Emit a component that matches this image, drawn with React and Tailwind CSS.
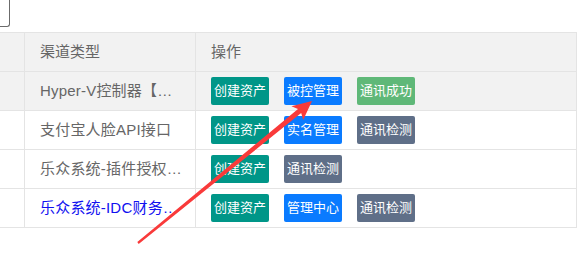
import React from "react";

const rows = [
  {
    name: "Hyper-V控制器【…",
    active: true,
    buttons: [
      { label: "创建资产", color: "bg-[#009688]" },
      { label: "被控管理", color: "bg-[#0a7bff]" },
      { label: "通讯成功", color: "bg-[#5fb878]" },
    ],
  },
  {
    name: "支付宝人脸API接口",
    buttons: [
      { label: "创建资产", color: "bg-[#009688]" },
      { label: "实名管理", color: "bg-[#0a7bff]" },
      { label: "通讯检测", color: "bg-[#5f6f88]" },
    ],
  },
  {
    name: "乐众系统-插件授权…",
    buttons: [
      { label: "创建资产", color: "bg-[#009688]" },
      { label: "通讯检测", color: "bg-[#5f6f88]" },
    ],
  },
  {
    name: "乐众系统-IDC财务…",
    link: true,
    buttons: [
      { label: "创建资产", color: "bg-[#009688]" },
      { label: "管理中心", color: "bg-[#0a7bff]" },
      { label: "通讯检测", color: "bg-[#5f6f88]" },
    ],
  },
];

function Arrow() {
  return (
    <svg
      className="absolute inset-0 pointer-events-none"
      width="578"
      height="278"
      viewBox="0 0 578 278"
    >
      <path
        d="M138.7 243.9 L301.2 113.1 L303.2 120 L312 101 L291.4 106.2 L298 109.1 L137.3 242.1 Z"
        fill="#f93a3a"
      />
    </svg>
  );
}

export default function App() {
  return (
    <div
      className="relative w-[578px] h-[278px] bg-white overflow-hidden text-[15px] text-[#666]"
      style={{ fontFamily: '"Liberation Sans", "Noto Sans CJK SC", sans-serif' }}
    >
      {/* search input, mostly scrolled off */}
      <div className="w-[10px] h-[27px] border-r border-b border-[#6b6b6b] rounded-br-[3px]" />

      <div className="mt-[5px] w-[577px] border-t border-[#e4e4e4]">
        <div className="grid grid-cols-[25px_171px_381px] h-[39px] border-b border-[#e4e4e4] bg-[#f2f2f2]">
          <div className="border-r border-[#e4e4e4]" />
          <div className="border-r border-[#e4e4e4] pl-[15px] flex items-center">渠道类型</div>
          <div className="border-r border-[#e4e4e4] pl-[15px] flex items-center">操作</div>
        </div>

        {rows.map((row, i) => (
          <div
            key={i}
            className={`grid grid-cols-[25px_171px_381px] h-[39px] border-b border-[#e4e4e4] ${
              row.active ? "bg-[#f2f2f2]" : "bg-white"
            }`}
          >
            <div className="border-r border-[#e4e4e4]" />
            <div
              className={`border-r border-[#e4e4e4] pl-[15px] flex items-center whitespace-nowrap overflow-hidden tracking-[0.2px] ${
                row.link ? "text-[#1010f0]" : ""
              }`}
            >
              {row.name}
            </div>
            <div className="border-r border-[#e4e4e4] pl-[15px] flex items-center gap-[15px]">
              {row.buttons.map((b) => (
                <span
                  key={b.label}
                  className={`${b.color} w-[58px] h-[28px] rounded-[2px] flex items-center justify-center text-white text-[13px] whitespace-nowrap`}
                >
                  {b.label}
                </span>
              ))}
            </div>
          </div>
        ))}
      </div>

      <Arrow />
    </div>
  );
}
